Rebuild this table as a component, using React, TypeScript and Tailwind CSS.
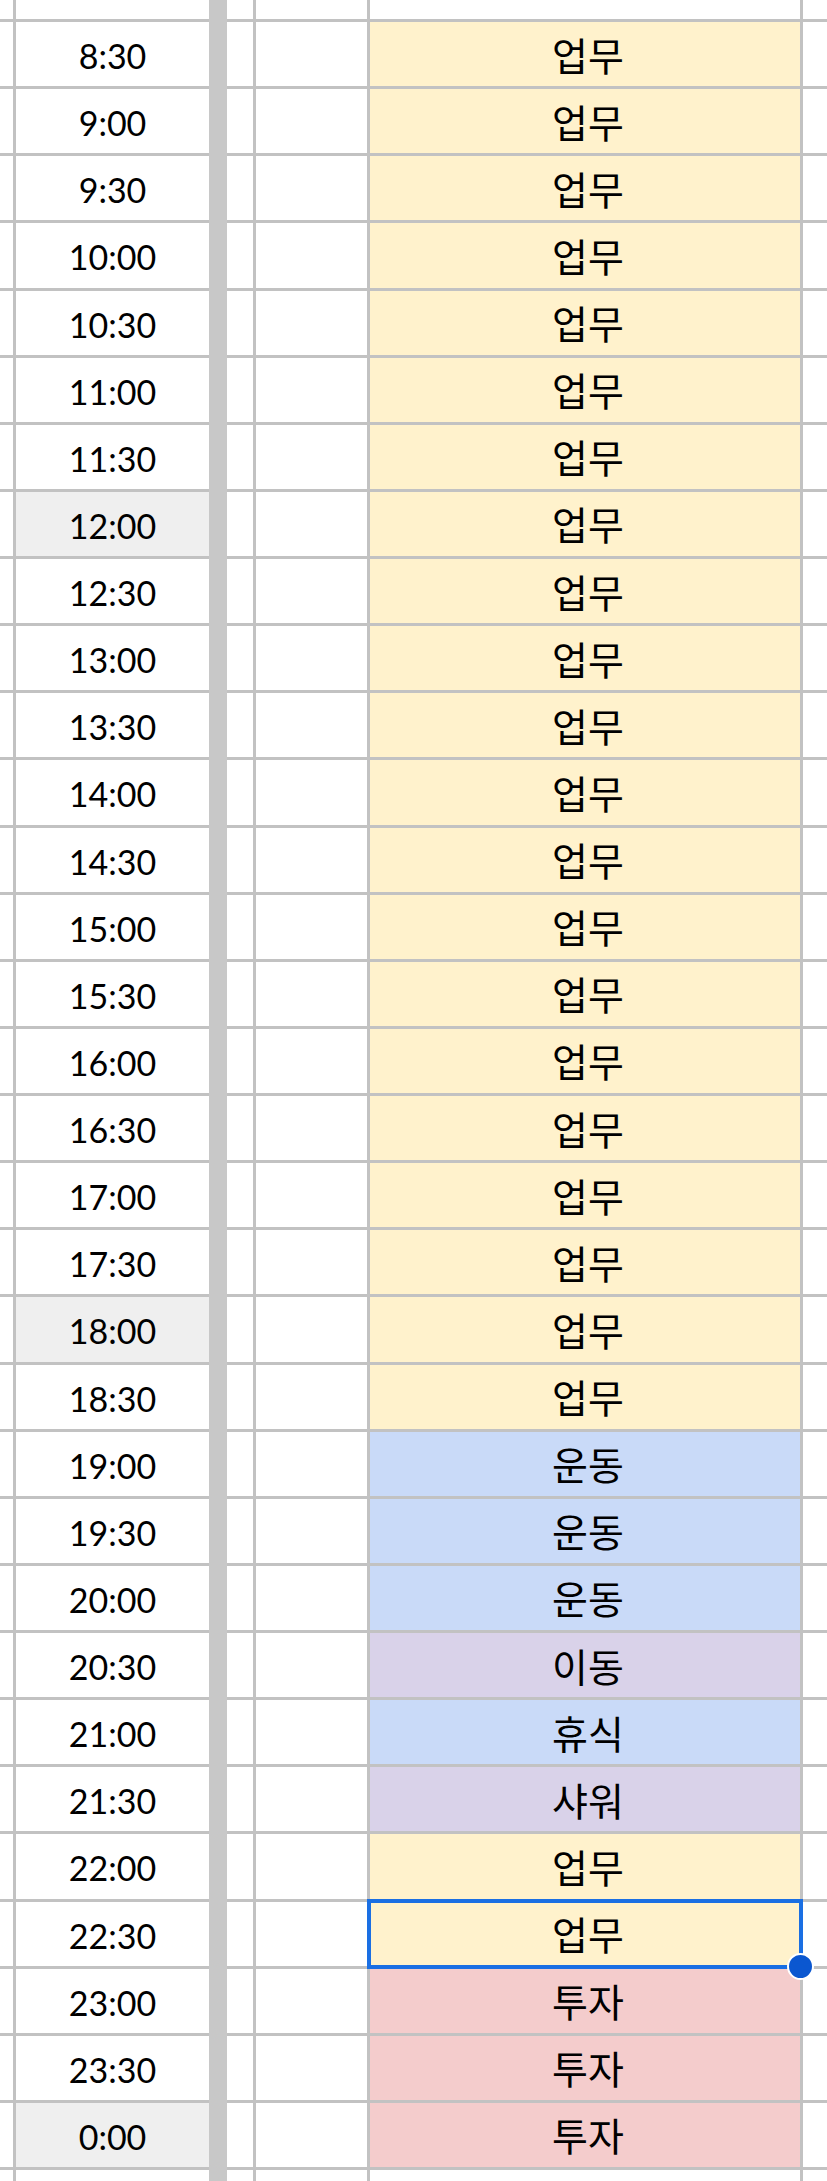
import React from "react";

type Kind = "Y" | "B" | "P" | "R";

const rows: { t: string; a: string; k: Kind; g?: boolean; sel?: boolean }[] = [
  { t: "8:30", a: "업무", k: "Y" },
  { t: "9:00", a: "업무", k: "Y" },
  { t: "9:30", a: "업무", k: "Y" },
  { t: "10:00", a: "업무", k: "Y" },
  { t: "10:30", a: "업무", k: "Y" },
  { t: "11:00", a: "업무", k: "Y" },
  { t: "11:30", a: "업무", k: "Y" },
  { t: "12:00", a: "업무", k: "Y", g: true },
  { t: "12:30", a: "업무", k: "Y" },
  { t: "13:00", a: "업무", k: "Y" },
  { t: "13:30", a: "업무", k: "Y" },
  { t: "14:00", a: "업무", k: "Y" },
  { t: "14:30", a: "업무", k: "Y" },
  { t: "15:00", a: "업무", k: "Y" },
  { t: "15:30", a: "업무", k: "Y" },
  { t: "16:00", a: "업무", k: "Y" },
  { t: "16:30", a: "업무", k: "Y" },
  { t: "17:00", a: "업무", k: "Y" },
  { t: "17:30", a: "업무", k: "Y" },
  { t: "18:00", a: "업무", k: "Y", g: true },
  { t: "18:30", a: "업무", k: "Y" },
  { t: "19:00", a: "운동", k: "B" },
  { t: "19:30", a: "운동", k: "B" },
  { t: "20:00", a: "운동", k: "B" },
  { t: "20:30", a: "이동", k: "P" },
  { t: "21:00", a: "휴식", k: "B" },
  { t: "21:30", a: "샤워", k: "P" },
  { t: "22:00", a: "업무", k: "Y" },
  { t: "22:30", a: "업무", k: "Y", sel: true },
  { t: "23:00", a: "투자", k: "R" },
  { t: "23:30", a: "투자", k: "R" },
  { t: "0:00", a: "투자", k: "R", g: true },
];

const bg: Record<Kind, string> = {
  Y: "bg-[#fff2cc]",
  B: "bg-[#c9daf8]",
  P: "bg-[#d9d2e9]",
  R: "bg-[#f4cccc]",
};

const timeFont = { fontFamily: "Lato, 'DejaVu Sans', sans-serif" };
const korFont = { fontFamily: "'Noto Sans CJK KR', 'Noto Sans', sans-serif" };

export default function App() {
  return (
    <div className="w-[827px] h-[2181px] flex bg-white overflow-hidden">
      {/* left frozen column */}
      <div className="w-[209px] flex flex-col gap-[3px] bg-[#c2c2c2]">
        <div className="h-[19px] flex gap-[3px] shrink-0">
          <div className="w-[13px] bg-white" />
          <div className="flex-1 bg-white" />
        </div>
        {rows.map((r) => (
          <div key={r.t} className="h-[64.125px] flex gap-[3px] shrink-0">
            <div className="w-[13px] bg-white" />
            <div
              className={`flex-1 flex items-center justify-center text-[34px] text-black pt-[3px] ${
                r.g ? "bg-[#efefef]" : "bg-white"
              }`}
              style={timeFont}
            >
              {r.t}
            </div>
          </div>
        ))}
        <div className="flex-1 flex gap-[3px]">
          <div className="w-[13px] bg-white" />
          <div className="flex-1 bg-white" />
        </div>
      </div>

      {/* frozen divider */}
      <div className="w-[18px] bg-[#c8c8c8]" />

      {/* right area */}
      <div className="flex-1 flex flex-col gap-[3px] bg-[#c2c2c2]">
        <div className="h-[19px] flex gap-[3px] shrink-0">
          <div className="w-[26px] bg-white" />
          <div className="w-[111px] bg-white" />
          <div className="w-[430px] bg-white" />
          <div className="flex-1 bg-white" />
        </div>
        {rows.map((r) => (
          <div key={r.t} className="h-[64.125px] flex gap-[3px] shrink-0">
            <div className="w-[26px] bg-white" />
            <div className="w-[111px] bg-white" />
            <div
              className={`relative w-[430px] flex items-center justify-center text-[39px] leading-none text-black ${bg[r.k]} ${
                r.sel ? "z-10" : ""
              }`}
              style={korFont}
            >
              <span className="pl-[6px]">{r.a}</span>
              {r.sel && (
                <>
                  <div className="absolute -top-[3px] -bottom-[3px] -left-[3px] -right-[3px] border-[4px] border-[#1a6fe3]" />
                  <div className="absolute -bottom-[14px] -right-[14px] w-[27px] h-[27px] rounded-full bg-[#0b57d0] border-2 border-white" />
                </>
              )}
            </div>
            <div className="flex-1 bg-white" />
          </div>
        ))}
        <div className="flex-1 flex gap-[3px]">
          <div className="w-[26px] bg-white" />
          <div className="w-[111px] bg-white" />
          <div className="w-[430px] bg-white" />
          <div className="flex-1 bg-white" />
        </div>
      </div>
    </div>
  );
}
